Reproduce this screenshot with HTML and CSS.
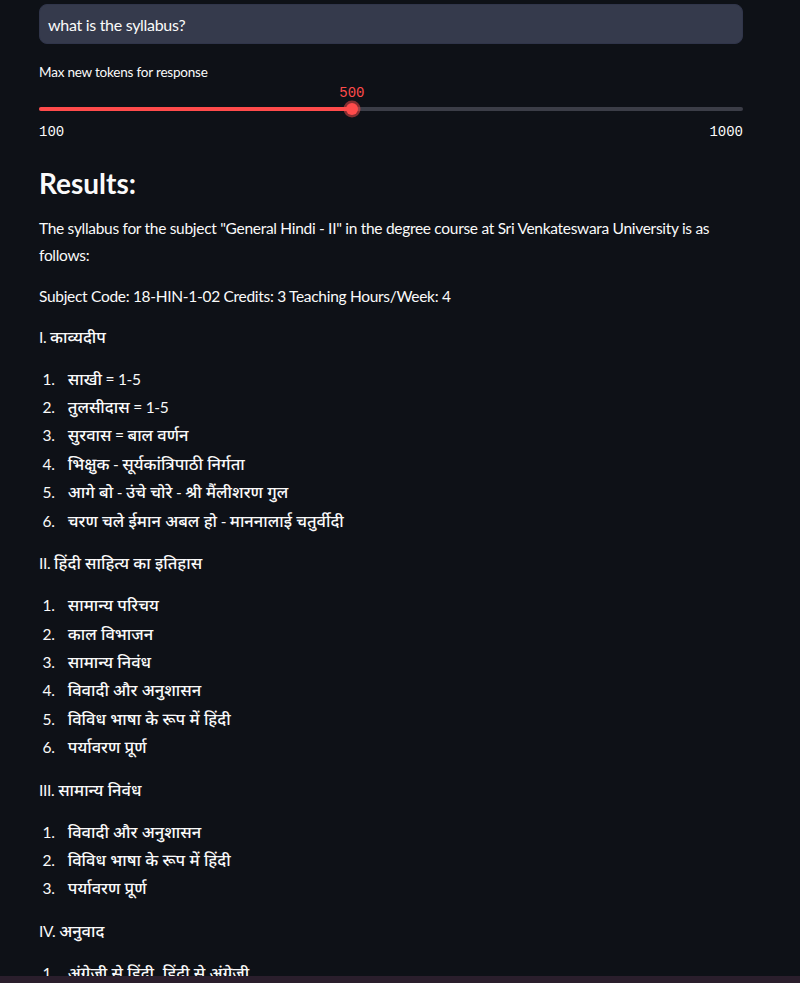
FILE: index.html
```html
<!DOCTYPE html>
<html lang="en">
<head>
<meta charset="utf-8">
<title>Results</title>
<link rel="stylesheet" href="styles.css">
</head>
<body>
<main class="main">
  <div class="text-input">what is the syllabus?</div>

  <div class="slider-block">
    <div class="slider-label">Max new tokens for response</div>
    <div class="slider">
      <div class="track">
        <div class="fill" style="width: 44.44%"></div>
      </div>
      <div class="thumb" style="left: 44.44%">
        <span class="thumb-value">500</span>
      </div>
    </div>
    <div class="ticks">
      <span>100</span>
      <span>1000</span>
    </div>
  </div>

  <h3 class="results-title">Results:</h3>

  <div class="markdown">
    <p>The syllabus for the subject "General Hindi - II" in the degree course at Sri Venkateswara University is as follows:</p>
    <p>Subject Code: 18-HIN-1-02 Credits: 3 Teaching Hours/Week: 4</p>
    <p>I. <span class="hi" lang="hi">काव्यदीप</span></p>
    <ol>
      <li><span class="hi" lang="hi">साखी</span> = 1-5</li>
      <li><span class="hi" lang="hi">तुलसीदास</span> = 1-5</li>
      <li><span class="hi" lang="hi">सुरवास</span> = <span class="hi" lang="hi">बाल वर्णन</span></li>
      <li><span class="hi" lang="hi">भिक्षुक</span> - <span class="hi" lang="hi">सूर्यकांत्रिपाठी निर्गता</span></li>
      <li><span class="hi" lang="hi">आगे बो</span> - <span class="hi" lang="hi">उंचे चोरे</span> - <span class="hi" lang="hi">श्री मैंलीशरण गुल</span></li>
      <li><span class="hi" lang="hi">चरण चले ईमान अबल हो</span> - <span class="hi" lang="hi">माननालाई चतुर्वीदी</span></li>
    </ol>
    <p>II. <span class="hi" lang="hi">हिंदी साहित्य का इतिहास</span></p>
    <ol>
      <li><span class="hi" lang="hi">सामान्य परिचय</span></li>
      <li><span class="hi" lang="hi">काल विभाजन</span></li>
      <li><span class="hi" lang="hi">सामान्य निवंध</span></li>
      <li><span class="hi" lang="hi">विवादी और अनुशासन</span></li>
      <li><span class="hi" lang="hi">विविध भाषा के रूप में हिंदी</span></li>
      <li><span class="hi" lang="hi">पर्यावरण प्रूर्ण</span></li>
    </ol>
    <p>III. <span class="hi" lang="hi">सामान्य निवंध</span></p>
    <ol>
      <li><span class="hi" lang="hi">विवादी और अनुशासन</span></li>
      <li><span class="hi" lang="hi">विविध भाषा के रूप में हिंदी</span></li>
      <li><span class="hi" lang="hi">पर्यावरण प्रूर्ण</span></li>
    </ol>
    <p>IV. <span class="hi" lang="hi">अनुवाद</span></p>
    <ol>
      <li><span class="hi" lang="hi">अंग्रेजी से हिंदी, हिंदी से अंग्रेजी</span></li>
    </ol>
  </div>
</main>
<div class="bottom-bar"></div>
</body>
</html>
```

FILE: styles.css
```css
html, body {
  margin: 0;
  padding: 0;
  background: #0e1117;
  height: 100%;
  overflow: hidden;
}

body {
  color: #fafafa;
  font-family: "Source Sans Pro", Lato, "Noto Sans", "Noto Sans Devanagari", sans-serif;
  font-size: 16px;
}

.main {
  padding: 4px 57px 0 39px;
  width: 704px;
}

.text-input {
  box-sizing: border-box;
  height: 40px;
  background: #353a4c;
  border: 1px solid #30354a;
  border-radius: 8px;
  padding: 0 8px;
  display: flex;
  align-items: center;
  font-size: 16px;
  letter-spacing: -0.3px;
  color: #fafafa;
}

.slider-block {
  margin-top: 18px;
}

.slider-label {
  font-size: 13.5px;
  letter-spacing: -0.2px;
  line-height: 20px;
  height: 20px;
}

.slider {
  position: relative;
  margin-top: 25px;
  height: 4px;
}

.track {
  height: 4px;
  border-radius: 2px;
  background: #3b3d47;
  overflow: hidden;
}

.fill {
  height: 100%;
  background: #ff4b4b;
}

.thumb {
  position: absolute;
  top: 2px;
  width: 12px;
  height: 12px;
  margin-left: -6px;
  margin-top: -6px;
  border-radius: 50%;
  background: #ff4b4b;
  box-shadow: 0 0 0 2.5px rgba(255, 75, 75, 0.5);
}

.thumb-value {
  position: absolute;
  left: 50%;
  bottom: 14px;
  transform: translateX(-50%);
  font-family: "Liberation Mono", "DejaVu Sans Mono", monospace;
  font-size: 14px;
  line-height: 16px;
  color: #ff4b4b;
}

.ticks {
  display: flex;
  justify-content: space-between;
  margin-top: 13px;
  font-family: "Liberation Mono", "DejaVu Sans Mono", monospace;
  font-size: 14px;
  line-height: 16px;
}

.results-title {
  margin: 27px 0 0 0;
  font-size: 28px;
  font-weight: 700;
  line-height: 33.6px;
}

.markdown {
  margin-top: 14px;
  font-size: 15.5px;
  letter-spacing: -0.3px;
}

.markdown p {
  margin: 0 0 14px 0;
  line-height: 27px;
}

.markdown ol {
  margin: 16px 0;
  padding: 0;
}

.markdown li {
  margin: 2.8px 0 2.8px 19.2px;
  padding-left: 9.6px;
  line-height: 25.6px;
}

.hi {
  font-family: "Noto Sans Devanagari", "Lohit Devanagari", "Noto Sans", sans-serif;
  font-size: 16.5px;
  font-weight: 500;
  letter-spacing: 0;
  line-height: 20px;
}

.bottom-bar {
  position: fixed;
  left: 0;
  right: 0;
  bottom: 0;
  height: 7px;
  background: #2a1e2c;
}
```
